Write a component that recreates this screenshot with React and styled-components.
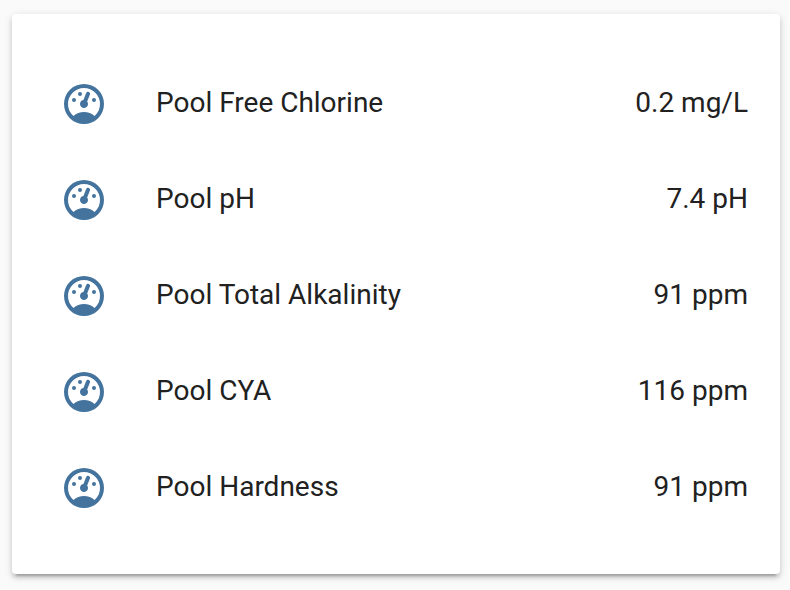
import React from "react";
import styled, { createGlobalStyle } from "styled-components";

const GlobalStyle = createGlobalStyle`
  * { box-sizing: border-box; }
  body { margin: 0; background: #fafafa; font-family: Roboto, "Liberation Sans", sans-serif; overflow: hidden; }
`;

const Page = styled.main`
  height: 590px;
  padding: 14px 10px 16px 12px;
`;

const Card = styled.section`
  height: 560px;
  padding: 50px 32px 30px;
  border-radius: 4px;
  background: #fff;
  box-shadow: 0 4px 4px 0 rgba(0, 0, 0, 0.14), 0 2px 10px 0 rgba(0, 0, 0, 0.12), 0 6px 2px -4px rgba(0, 0, 0, 0.2);
`;

const EntityList = styled.ul`
  display: grid;
  gap: 16px;
  margin: 0;
  padding: 0;
  list-style: none;
`;

const EntityRow = styled.li`
  display: flex;
  align-items: center;
  height: 80px;
  color: #212121;
  font-size: 28px;
  line-height: 40px;
  white-space: nowrap;
`;

const IconSlot = styled.span`
  display: grid;
  place-items: center;
  width: 80px;
  height: 80px;
  color: #44739e;
`;

const Name = styled.span`
  flex: 1;
  margin-left: 32px;
  padding-bottom: 2px;
`;

const Value = styled.span`
  padding-bottom: 2px;
  text-align: right;
`;

const Gauge = () => (
  <svg width="48" height="48" viewBox="0 0 24 24" fill="currentColor" aria-hidden="true">
    <path d="M12,2A10,10 0 0,0 2,12A10,10 0 0,0 12,22A10,10 0 0,0 22,12A10,10 0 0,0 12,2M12,4A8,8 0 0,1 20,12C20,14.4 19,16.5 17.3,18C15.9,16.7 14,16 12,16C10,16 8.2,16.7 6.7,18C5,16.5 4,14.4 4,12A8,8 0 0,1 12,4M14,5.89C13.62,5.9 13.26,6.15 13.1,6.54L11.81,9.77L11.71,10C11,10.13 10.41,10.6 10.14,11.26C9.73,12.29 10.23,13.45 11.26,13.86C12.29,14.27 13.45,13.77 13.86,12.74C14.12,12.08 14,11.32 13.57,10.76L13.67,10.5L14.96,7.29L14.97,7.26C15.17,6.75 14.92,6.17 14.41,5.96C14.28,5.91 14.15,5.89 14,5.89M10,6A1,1 0 0,0 9,7A1,1 0 0,0 10,8A1,1 0 0,0 11,7A1,1 0 0,0 10,6M7,9A1,1 0 0,0 6,10A1,1 0 0,0 7,11A1,1 0 0,0 8,10A1,1 0 0,0 7,9M17,9A1,1 0 0,0 16,10A1,1 0 0,0 17,11A1,1 0 0,0 18,10A1,1 0 0,0 17,9Z" />
  </svg>
);

const readings = [
  ["Pool Free Chlorine", "0.2 mg/L"],
  ["Pool pH", "7.4 pH"],
  ["Pool Total Alkalinity", "91 ppm"],
  ["Pool CYA", "116 ppm"],
  ["Pool Hardness", "91 ppm"],
];

export default function App() {
  return (
    <Page>
      <GlobalStyle />
      <Card>
        <EntityList>
          {readings.map(([name, value]) => (
            <EntityRow key={name}>
              <IconSlot><Gauge /></IconSlot>
              <Name>{name}</Name>
              <Value>{value}</Value>
            </EntityRow>
          ))}
        </EntityList>
      </Card>
    </Page>
  );
}
